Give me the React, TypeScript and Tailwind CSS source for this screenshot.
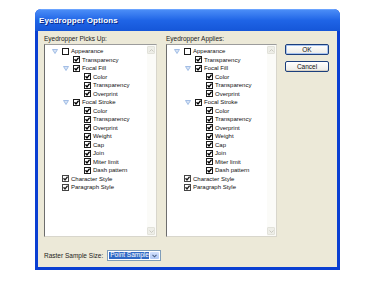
import React from 'react';

type Row = { label: string; level: number; twisty?: boolean; checked: boolean; soft?: boolean };

const ROWS: Row[] = [
  { label: 'Appearance', level: 0, twisty: true, checked: false },
  { label: 'Transparency', level: 1, checked: true },
  { label: 'Focal Fill', level: 1, twisty: true, checked: true },
  { label: 'Color', level: 2, checked: true },
  { label: 'Transparency', level: 2, checked: true },
  { label: 'Overprint', level: 2, checked: true },
  { label: 'Focal Stroke', level: 1, twisty: true, checked: true },
  { label: 'Color', level: 2, checked: true },
  { label: 'Transparency', level: 2, checked: true },
  { label: 'Overprint', level: 2, checked: true },
  { label: 'Weight', level: 2, checked: true },
  { label: 'Cap', level: 2, checked: true },
  { label: 'Join', level: 2, checked: true },
  { label: 'Miter limit', level: 2, checked: true },
  { label: 'Dash pattern', level: 2, checked: true },
  { label: 'Character Style', level: 0, checked: true, soft: true },
  { label: 'Paragraph Style', level: 0, checked: true, soft: true },
];

const Twisty = () => (
  <svg width="6" height="5" viewBox="0 0 6 5" className="ml-[2px]">
    <path d="M0.5 0.5 H5.5 L3 4.5 Z" fill="#d8e4f6" stroke="#8fb0e0" strokeWidth="0.8" />
  </svg>
);

const Check = ({ checked, soft }: { checked: boolean; soft?: boolean }) => (
  <span
    className={`w-[7px] h-[7px] shrink-0 border bg-white flex items-center justify-center ${
      soft ? 'border-[#444]' : 'border-[#1a1a1a]'
    }`}
  >
    {checked && (
      <svg width="5" height="5" viewBox="0 0 5 5">
        <path d="M0.5 2.2 L2 3.9 L4.6 0.7" fill="none" stroke={soft ? '#222' : '#000'} strokeWidth="1.4" />
      </svg>
    )}
  </span>
);

const ScrollBtn = ({ up }: { up?: boolean }) => (
  <div className="w-[8px] h-[8px] bg-[#eeeee8] border border-[#e2e2da] rounded-[1px] flex items-center justify-center">
    <svg width="5" height="3" viewBox="0 0 5 3">
      <path d={up ? 'M0.5 2.5 L2.5 0.5 L4.5 2.5' : 'M0.5 0.5 L2.5 2.5 L4.5 0.5'} fill="none" stroke="#c4c4bc" strokeWidth="0.9" />
    </svg>
  </div>
);

const TreeBox = ({ width }: { width: string }) => (
  <div className={`${width} h-[193px] bg-white border-l border-t border-l-[#6d6d6d] border-t-[#9c9c9c] border-r border-b border-r-[#d8d6cc] border-b-[#d8d6cc] flex`}>
    <div className="flex-1 pt-[2px]">
      {ROWS.map((r, i) => (
        <div
          key={i}
          className="h-[8.5px] flex items-center"
          style={{ paddingLeft: 5 + r.level * 11 }}
        >
          <span className="w-[12px] shrink-0 flex items-center">{r.twisty && <Twisty />}</span>
          <Check checked={r.checked} soft={r.soft} />
          <span className="ml-[2px] text-[6px] leading-none text-[#111] whitespace-nowrap">{r.label}</span>
        </div>
      ))}
    </div>
    <div className="w-[9px] bg-[#fbfbf8] flex flex-col justify-between py-[1px]">
      <ScrollBtn up />
      <ScrollBtn />
    </div>
  </div>
);

const XpButton = ({ label, isDefault }: { label: string; isDefault?: boolean }) => (
  <div
    className={`w-[44px] h-[11px] rounded-[2px] border border-[#1c3f7c] bg-gradient-to-b from-white to-[#ecebe6] flex items-center justify-center text-[6.5px] text-[#111] ${
      isDefault ? 'shadow-[inset_0_0_0_1px_#a8c4f0]' : 'shadow-[inset_0_-1px_0_#d6d0c5]'
    }`}
  >
    {label}
  </div>
);

export default function App() {
  return (
    <div className="w-[375px] h-[282px] bg-white pt-[9px] pl-[35px] font-['Liberation_Sans',Arial,sans-serif]">
      <div className="w-[305px] h-[261px] flex flex-col rounded-t-[6px] overflow-hidden bg-[#0a3fd2]">
        <div className="h-[22px] shrink-0 bg-gradient-to-b from-[#4a8cf6] via-[#1f64e6] to-[#1556d8] flex items-center pl-[4px] border-t border-t-[#6aa3ff]">
          <span className="text-white font-bold text-[8px] tracking-[0.1px] [text-shadow:1px_1px_0_#0a2a8a]">Eyedropper Options</span>
        </div>
        <div className="flex-1 mx-[3px] mb-[3px] bg-[#ece9d8] flex flex-col pl-[6px] pt-[3px]">
          <div className="flex">
            <div className="flex flex-col">
              <div className="h-[10px] text-[6.5px] leading-[10px] text-[#222]">Eyedropper Picks Up:</div>
              <TreeBox width="w-[113px]" />
            </div>
            <div className="flex flex-col ml-[9px]">
              <div className="h-[10px] text-[6.5px] leading-[10px] text-[#222]">Eyedropper Applies:</div>
              <TreeBox width="w-[111px]" />
            </div>
            <div className="flex flex-col ml-[8px] pt-[10px] gap-[6px]">
              <XpButton label="OK" isDefault />
              <XpButton label="Cancel" />
            </div>
          </div>
          <div className="flex items-center mt-[13px] h-[11px]">
            <span className="text-[6.5px] text-[#222] whitespace-nowrap">Raster Sample Size:</span>
            <div className="ml-[4px] w-[54px] h-[11px] border border-[#7f9db9] bg-white flex items-stretch p-[1px]">
              <div className="flex-1 bg-[#316ac5] flex items-center pl-[1px]">
                <span className="text-white text-[6.5px] leading-none whitespace-nowrap">Point Sample</span>
              </div>
              <div className="w-[9px] ml-[1px] rounded-[1px] bg-gradient-to-b from-[#d2e0fd] to-[#b0c8f5] flex items-center justify-center">
                <svg width="5" height="4" viewBox="0 0 5 4">
                  <path d="M0.5 0.8 L2.5 2.8 L4.5 0.8" fill="none" stroke="#4d6185" strokeWidth="1.1" />
                </svg>
              </div>
            </div>
          </div>
        </div>
      </div>
    </div>
  );
}
